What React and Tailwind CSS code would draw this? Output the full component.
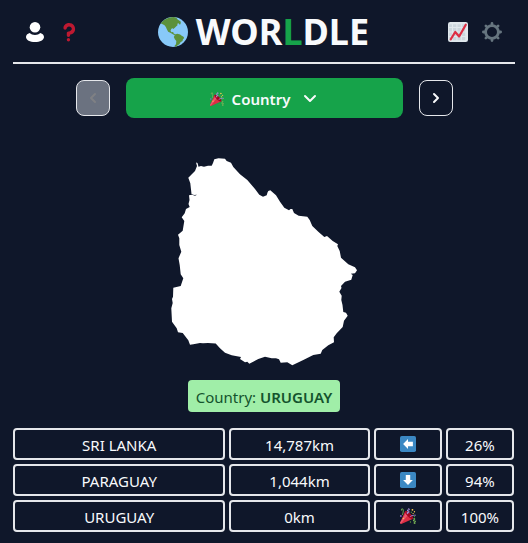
import React from "react";

const guesses = [
  { country: "SRI LANKA", distance: "14,787km", hint: "left", percent: "26%" },
  { country: "PARAGUAY", distance: "1,044km", hint: "down", percent: "94%" },
  { country: "URUGUAY", distance: "0km", hint: "party", percent: "100%" },
];

function Globe({ className }) {
  return (
    <svg viewBox="0 0 36 36" className={className} aria-hidden="true">
      <circle cx="18" cy="18" r="18" fill="#88C9F9" />
      <path
        fill="#5C913B"
        d="M5 5.600C8 2.600 12 .8 16 .2L19 .1 22 1l1.600 2 1.400.8 2.400 1.800-.4 3-1.400.4-.8-1.400-1.600.4.2 2-1.400 1.200-1.800 1.800-1.800 1.400-.8-1-1.600.8-1 2.400 1.200 1.600 2-.2.6 1.800 2 .8-.4.9-1.600-.2-3.400-2-3.200-1.700-1.600-3-1.200-2.600-1.600-2.200L5 8.500l-1.600-.8zM20.400 21l2.600-1 3.600 1 1.400 1.200 2.600 1.400.8 1.600-1.400 1.600-.6 2-2.400 1.600-1.400 2.200-2 1.400-1.400 1.500-1.600.2-.6-1.500 1.600-1.600.4-3.800-1.800-2-1.200-2.800z"
      />
    </svg>
  );
}

function Party({ className }) {
  return (
    <svg viewBox="0 0 36 36" className={className} aria-hidden="true">
      <path fill="#DD2E44" d="M11.626 7.488c-.112.112-.197.247-.268.395l-.008-.008L.134 33.141l.011.011c-.208.403.14 1.223.853 1.937.713.713 1.533 1.061 1.936.853l.01.01L28.21 24.735l-.008-.009c.147-.07.282-.155.395-.269 1.562-1.562-.971-6.627-5.656-11.313-4.687-4.686-9.752-7.218-11.315-5.656z" />
      <path fill="#EA596E" d="M13 12L.416 32.506l-.282.635.011.011c-.208.403.14 1.223.853 1.937.232.232.473.408.709.557L17 17l-4-5z" />
      <path fill="#A0041E" d="M23.012 13.066c4.67 4.672 7.263 9.652 5.789 11.124-1.473 1.474-6.453-1.118-11.126-5.788-4.671-4.672-7.263-9.654-5.79-11.127 1.474-1.473 6.454 1.119 11.127 5.791z" />
      <path fill="#AA8DD8" d="M18.59 13.609c-.199.161-.459.245-.734.215-.868-.094-1.598-.396-2.109-.873-.541-.505-.808-1.183-.735-1.862.128-1.192 1.324-2.286 3.363-2.066.793.085 1.147-.17 1.159-.292.014-.121-.277-.446-1.07-.532-.868-.094-1.598-.396-2.11-.873-.541-.505-.809-1.183-.735-1.862.13-1.192 1.325-2.286 3.362-2.065.578.062.883-.057 1.012-.134.103-.063.144-.123.148-.158.012-.121-.275-.446-1.07-.532-.549-.06-.947-.552-.886-1.102.059-.549.55-.946 1.101-.886 2.037.219 2.973 1.542 2.844 2.735-.13 1.194-1.325 2.286-3.364 2.067-.578-.063-.88.057-1.01.134-.103.062-.145.123-.149.157-.013.122.276.446 1.071.532 2.037.22 2.973 1.542 2.844 2.735-.129 1.192-1.324 2.286-3.362 2.065-.578-.062-.882.058-1.012.134-.104.064-.144.124-.148.158-.013.121.276.446 1.07.532.548.06.947.553.886 1.102-.028.274-.167.511-.366.671z" />
      <path fill="#77B255" d="M30.661 22.857c1.973-.557 3.334.323 3.658 1.478.324 1.154-.378 2.615-2.35 3.17-.77.216-1.001.584-.97.701.034.118.425.312 1.193.095 1.972-.555 3.333.325 3.657 1.479.326 1.155-.378 2.614-2.351 3.17-.769.216-1.001.585-.967.702.033.117.423.311 1.192.095.53-.149 1.084.16 1.233.691.148.532-.161 1.084-.693 1.234-1.971.555-3.333-.323-3.659-1.479-.324-1.154.379-2.613 2.353-3.169.77-.217 1.001-.584.967-.702-.032-.117-.422-.312-1.19-.096-1.974.556-3.334-.322-3.659-1.479-.325-1.154.378-2.613 2.351-3.17.768-.215.999-.585.967-.701-.034-.118-.423-.312-1.192-.096-.532.15-1.083-.16-1.233-.691-.149-.53.161-1.082.693-1.232z" />
      <path fill="#AA8DD8" d="M23.001 20.16c-.294 0-.584-.129-.782-.375-.345-.432-.274-1.061.156-1.406.218-.175 5.418-4.259 12.767-3.208.547.078.927.584.849 1.131-.078.546-.58.93-1.132.848-6.493-.922-11.187 2.754-11.233 2.791-.186.148-.406.219-.625.219z" />
      <path fill="#77B255" d="M5.754 16c-.095 0-.192-.014-.288-.042-.529-.159-.829-.716-.67-1.245 1.133-3.773 2.16-9.794.898-11.364-.141-.178-.354-.353-.842-.316-.938.072-.849 2.051-.848 2.071.042.551-.372 1.031-.922 1.072-.559.034-1.031-.372-1.072-.923-.103-1.379.326-4.035 2.692-4.214 1.056-.08 1.933.287 2.552 1.057 2.371 2.951-.036 11.506-.542 13.192-.13.433-.528.712-.958.712z" />
      <circle fill="#5C913B" cx="25.5" cy="9.5" r="1.5" />
      <circle fill="#9266CC" cx="2" cy="18" r="2" />
      <circle fill="#5C913B" cx="32.5" cy="19.5" r="1.5" />
      <circle fill="#5C913B" cx="23.5" cy="31.5" r="1.5" />
      <circle fill="#FFCC4D" cx="28" cy="4" r="2" />
      <circle fill="#FFCC4D" cx="32.5" cy="8.5" r="1.5" />
      <circle fill="#FFCC4D" cx="29.5" cy="12.5" r="1.5" />
      <circle fill="#FFCC4D" cx="7.5" cy="23.5" r="1.5" />
    </svg>
  );
}

function Arrow({ down }) {
  return (
    <svg viewBox="0 0 36 36" className="size-4" aria-hidden="true">
      <rect width="36" height="36" rx="4" fill="#3B88C3" />
      <path
        fill="#fff"
        d={down ? "M29 18h-6V7H13v11H7l11 11z" : "M18 7v6h11v10H18v6L7 18z"}
      />
    </svg>
  );
}

function Person() {
  return (
    <svg viewBox="0 0 20 20" className="size-5" aria-hidden="true">
      <circle cx="10" cy="5.300" r="5.300" fill="#fff" />
      <path
        fill="#fff"
        d="M4.600 11C6 12.300 7.800 13 10 13s4-.7 5.400-2c2.200.8 3.600 2.200 3.600 4 0 3-4 5-9 5s-9-2-9-5c0-1.800 1.400-3.200 3.600-4z"
      />
    </svg>
  );
}

function Question() {
  return (
    <svg viewBox="0 0 36 36" className="size-5" aria-hidden="true">
      <g fill="#BE1931">
        <path d="M17 27c-1.657 0-3-1.343-3-3v-4c0-1.657 1.343-3 3-3 .603-.006 6-1 6-5 0-2-2-4-5-4-2.441 0-4 2-4 3 0 1.657-1.343 3-3 3s-3-1.343-3-3c0-4.878 4.580-9 10-9 8 0 11 5.982 11 11 0 4.145-2.277 7.313-6.413 8.920-.9.351-1.790.587-2.587.747V24c0 1.657-1.343 3-3 3z" />
        <circle cx="17" cy="32" r="3" />
      </g>
    </svg>
  );
}

function Chart() {
  return (
    <svg viewBox="0 0 36 36" className="size-5" aria-hidden="true">
      <rect width="36" height="36" rx="4" fill="#E1E8ED" />
      <path
        fill="#CCD6DD"
        d="M2 4h5v5H2zM9 4h6v5H9zM17 4h6v5h-6zM25 4h6v5h-6zM2 11h5v6H2zM9 11h6v6H9zM17 11h6v6h-6zM25 11h6v6h-6zM2 19h5v6H2zM9 19h6v6H9zM17 19h6v6h-6zM25 19h6v6h-6zM2 27h5v6H2zM9 27h6v6H9zM17 27h6v6h-6zM25 27h6v6h-6z"
      />
      <path
        d="M5 31l8-13 7 8L32 5"
        fill="none"
        stroke="#DD2E44"
        strokeWidth="4"
        strokeLinecap="round"
        strokeLinejoin="round"
      />
    </svg>
  );
}

function Gear() {
  return (
    <svg viewBox="0 0 36 36" className="size-5" aria-hidden="true">
      <g stroke="#66757F" fill="none">
        <circle cx="18" cy="18" r="11.500" strokeWidth="5" />
        <path
          strokeWidth="5"
          strokeLinecap="round"
          d="M18 5V2.500M18 33.500V31M5 18H2.500M33.500 18H31M8.800 8.800L7 7M29 29l-1.800-1.800M8.800 27.200L7 29M29 7l-1.800 1.800"
        />
      </g>
    </svg>
  );
}

function Chevron({ d, className }) {
  return (
    <svg viewBox="0 0 16 16" className={className} aria-hidden="true">
      <path
        d={d}
        fill="none"
        stroke="currentColor"
        strokeWidth="2"
        strokeLinecap="round"
        strokeLinejoin="round"
      />
    </svg>
  );
}

function CountryShape() {
  return (
    <svg
      viewBox="133 118 262 262"
      className="size-[262px]"
      role="img"
      aria-label="Country outline"
    >
      <polygon
        fill="#fff"
        points="196,162.500 197.500,163 198.500,166.700 201,166 204,166.700 208,165.800 211.700,165.700 213,163 214.300,159.300 218.500,158.300 225,158.700 226.700,161 231,162.700 233.300,167 240,174.300 247.300,180 255,189 259.300,194.700 263,196.700 266.700,195.300 267.500,192.500 268.300,191 270.300,190.300 276,195.300 280,201.700 284.300,207.700 289,210.300 290.500,209 292.300,209 294,213 298.700,215.700 307.300,216.700 309.700,220 312.300,226 318.300,231.700 324.300,237 327,236 332.700,241 338,244.300 337.300,246 339.700,251 341,257.700 348.300,264.300 355,267.300 357,270.300 355,273.300 350.700,273.700 352.700,275 351.300,279.700 345,281.700 341,286 341.500,288 339.300,291.700 341.700,295.700 341.300,300 342.500,305 343.300,312 346,312.800 347.700,315.700 344,320.700 342.700,327 336.700,333.300 333.700,337.300 334,342.300 328.300,345.300 322.300,350 320.700,353.700 313.300,355 303.300,360 292.300,365.300 287.300,362.300 280.700,362.700 279,359.300 276,358.300 271.700,358.300 265,356.800 258.300,359 249.300,363.700 247.300,361.700 245,362.300 240,359 241,357 231.700,355.300 225,352.700 220,348.300 215.700,343.500 208,343 203,343.300 200,343 193.300,344.300 190,344.700 188.300,340.300 182.700,333 178,332.300 176.700,328.300 172,321.700 171.300,308.300 172.700,303 172,299 173,296.700 173.300,287.700 180.700,286 183.300,278.300 180.700,274.300 179.700,265 178.500,258.300 181.300,251.700 179.300,245 179.300,238.300 178,234.700 182.700,230.700 184.300,221 181.700,217.300 184.700,213.300 186,209 189.700,207 188.500,204 189.500,200 189,195.300 192,194.800 195,195.800 197,194.800 194,195 191.500,194 190.300,183.300 188.300,177.700 195,171 197,166"
      />
    </svg>
  );
}

const headerButton = "flex size-[34px] items-center justify-center";
const stepButton =
  "flex h-9 w-[34px] items-center justify-center rounded-lg border border-[#e5e7eb]";
const cell =
  "flex h-8 items-center justify-center rounded border-2 border-[#e5e7eb]";
const textCell = cell + " pt-0.5";

export default function App() {
  return (
    <main className="min-h-screen bg-[#0f172a] px-[13px] pb-3 font-['Noto_Sans','Open_Sans',sans-serif] text-[15px] leading-6 text-slate-50">
      <div className="mx-auto flex max-w-lg flex-col items-center">
        <header className="flex h-16 w-full items-center justify-between border-b-2 border-[#e5e7eb] pt-0.5 pl-[5px] pr-1.5">
          <div className="flex">
            <button type="button" aria-label="Profile" className={headerButton}>
              <Person />
            </button>
            <button type="button" aria-label="How to play" className={headerButton}>
              <Question />
            </button>
          </div>
          <h1 className="flex items-center gap-2 text-4xl font-bold">
            <Globe className="size-[30px]" />
            <span>
              WOR<span className="text-[#16a34a]">L</span>DLE
            </span>
          </h1>
          <div className="flex">
            <button type="button" aria-label="Statistics" className={headerButton}>
              <Chart />
            </button>
            <button type="button" aria-label="Settings" className={headerButton}>
              <Gear />
            </button>
          </div>
        </header>

        <nav className="mt-[14px] flex w-[377px] max-w-full items-center gap-4">
          <button
            type="button"
            disabled
            aria-label="Previous round"
            className={stepButton + " bg-[#6b7280] text-[#7f8084]"}
          >
            <Chevron d="M10 4L6 8l4 4" className="size-4" />
          </button>
          <button
            type="button"
            aria-haspopup="listbox"
            className="flex h-10 flex-1 items-center justify-center rounded-lg bg-[#16a34a] pt-0.5 font-semibold"
          >
            <Party className="mr-2 size-[14px]" />
            Country
            <Chevron d="M3 5l5 5 5-5" className="ml-3 size-4" />
          </button>
          <button
            type="button"
            aria-label="Next round"
            className={stepButton}
          >
            <Chevron d="M6 4l4 4-4 4" className="size-4" />
          </button>
        </nav>

        <CountryShape />

        <p className="rounded bg-[#a0eea8] px-2 pt-[5px] pb-[3px] text-[#14532d]">
          Country: <strong className="font-semibold">URUGUAY</strong>
        </p>

        <table aria-label="Guesses" className="mt-4 block w-full pr-px">
          <tbody className="flex flex-col gap-1">
            {guesses.map((g) => (
              <tr key={g.country} className="grid grid-cols-7 gap-1">
                <td className={textCell + " col-span-3"}>{g.country}</td>
                <td className={textCell + " col-span-2"}>{g.distance}</td>
                <td className={cell}>
                  {g.hint === "party" ? (
                    <Party className="size-4" />
                  ) : (
                    <Arrow down={g.hint === "down"} />
                  )}
                </td>
                <td className={textCell}>{g.percent}</td>
              </tr>
            ))}
          </tbody>
        </table>
      </div>
    </main>
  );
}
